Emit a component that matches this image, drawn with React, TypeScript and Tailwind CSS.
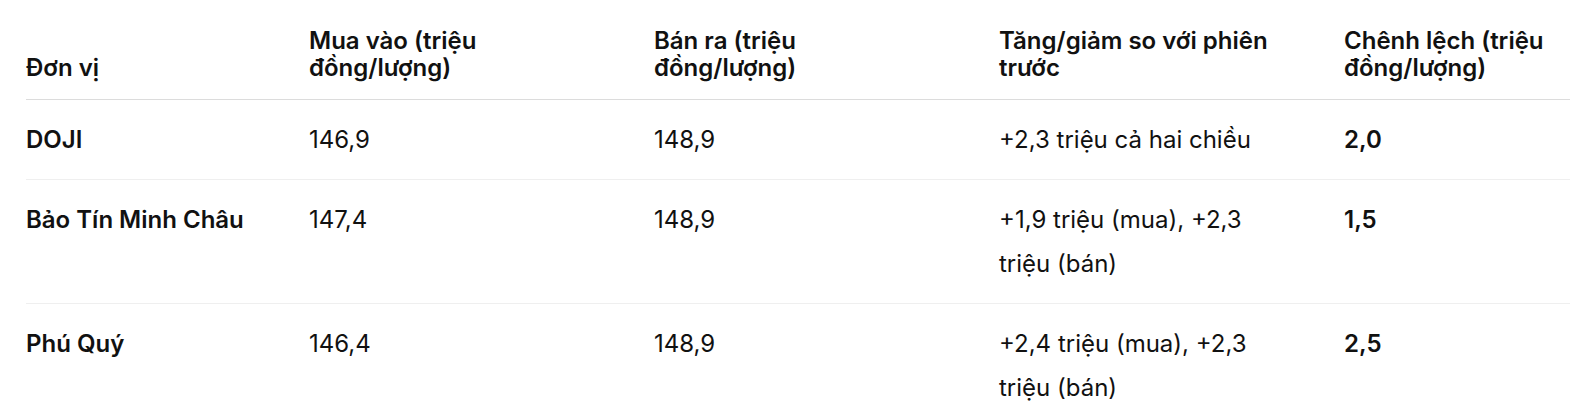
import React from "react";

const rows = [
  { name: "DOJI", buy: "146,9", sell: "148,9", change: "+2,3 triệu cả hai chiều", diff: "2,0" },
  { name: "Bảo Tín Minh Châu", buy: "147,4", sell: "148,9", change: "+1,9 triệu (mua), +2,3 triệu (bán)", diff: "1,5" },
  { name: "Phú Quý", buy: "146,4", sell: "148,9", change: "+2,4 triệu (mua), +2,3 triệu (bán)", diff: "2,5" },
];

const headers = [
  "Đơn vị",
  "Mua vào (triệu đồng/lượng)",
  "Bán ra (triệu đồng/lượng)",
  "Tăng/giảm so với phiên trước",
  "Chênh lệch (triệu đồng/lượng)",
];

export default function App() {
  return (
    <div className="h-[418px] w-[1570px] overflow-hidden bg-white font-['Inter','Noto_Sans',sans-serif] text-[#111111] antialiased">
      <div className="pl-[26px] pt-[9px]">
        <div className="w-[1663px]">
          <div className="grid grid-cols-[283px_345px_345px_345px_345px] items-end border-b border-[#dcdcdc]">
            {headers.map((h) => (
              <div key={h} className="py-[17.5px] pr-[64px] text-[24px] font-semibold leading-[27.5px]">
                {h}
              </div>
            ))}
          </div>
          {rows.map((r) => (
            <div
              key={r.name}
              className="grid grid-cols-[283px_345px_345px_345px_345px] items-start border-b border-[#efefef] text-[24px] leading-[44px]"
            >
              <div className="py-[17.5px] pr-[40px] font-semibold">{r.name}</div>
              <div className="py-[17.5px] pr-[64px]">{r.buy}</div>
              <div className="py-[17.5px] pr-[64px]">{r.sell}</div>
              <div className="py-[17.5px] pr-[64px]">{r.change}</div>
              <div className="py-[17.5px] pr-[64px] font-semibold">{r.diff}</div>
            </div>
          ))}
        </div>
      </div>
    </div>
  );
}
